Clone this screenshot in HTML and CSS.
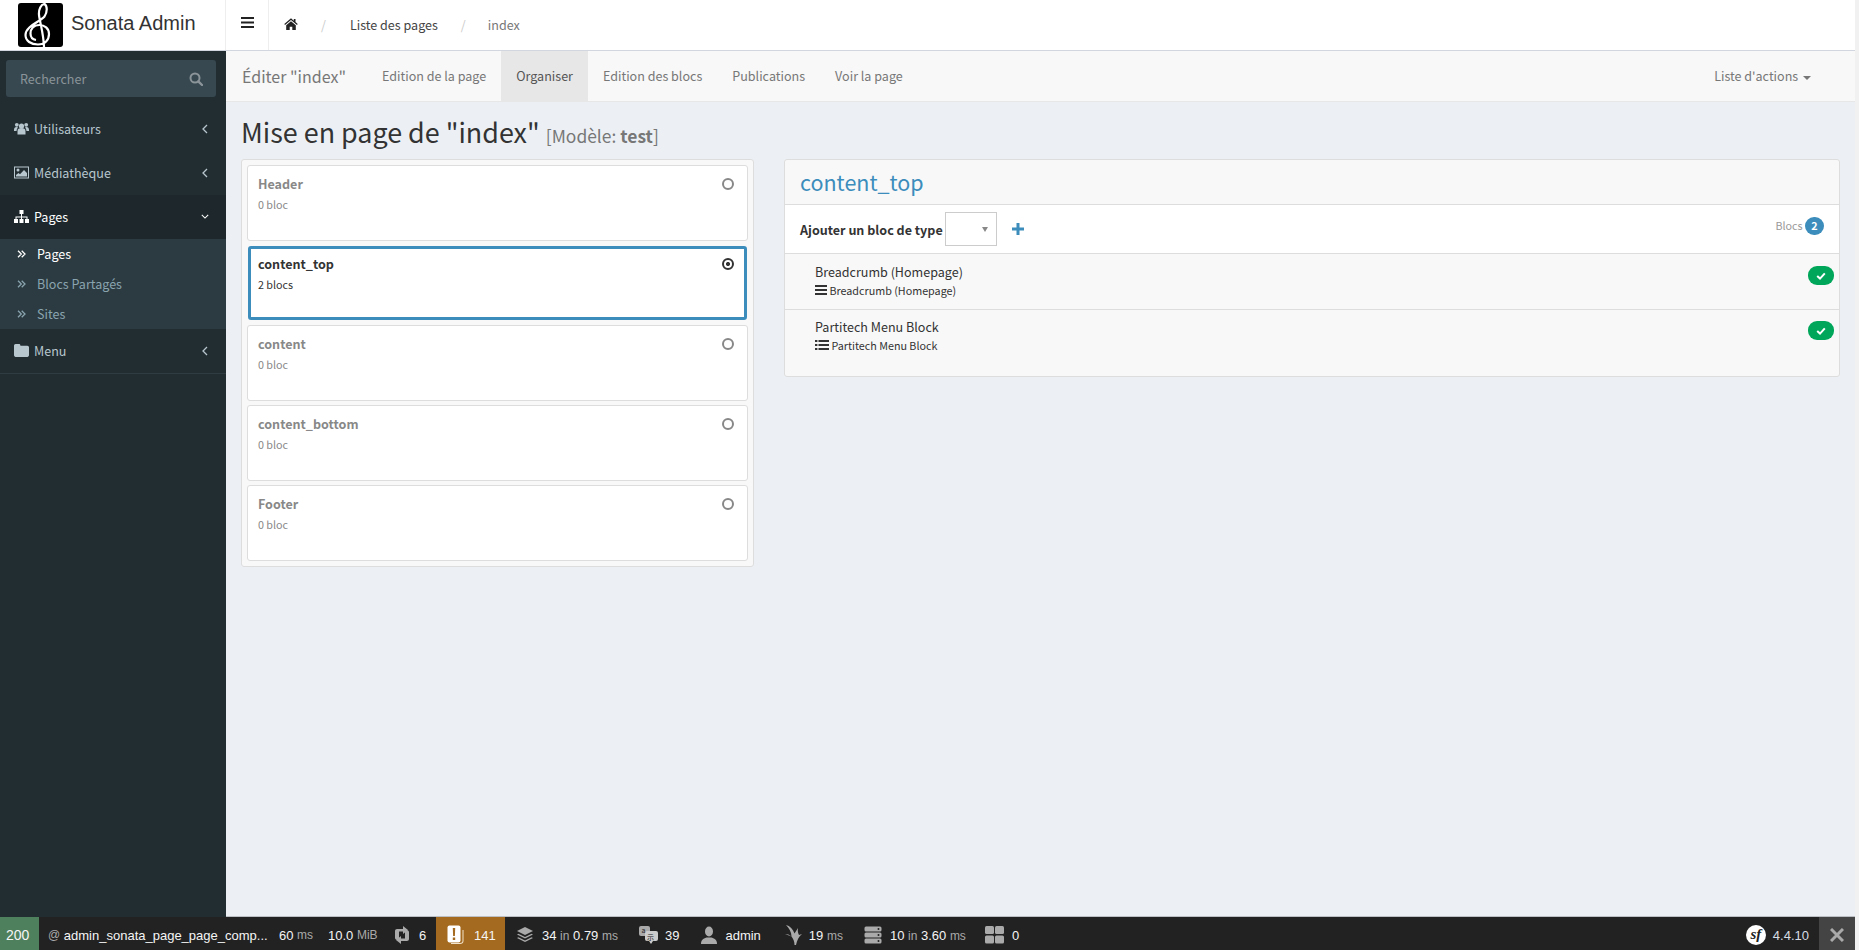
FILE: index.html
```html
<!DOCTYPE html>
<html lang="fr">
<head>
    <meta charset="UTF-8">
    <meta name="viewport" content="width=device-width, initial-scale=1.0">
    <title>Mise en page de "index"</title>
    <link rel="stylesheet" href="styles.css">
</head>
<body>
    <div class="app">
        <header class="topbar">
            <a class="logo">
                <svg class="logo-img" viewBox="0 0 45 44">
                    <rect width="45" height="44" rx="3" fill="#000"/>
                    <path d="M26 44C25.5 30 22 20 21 12 20.5 6 23 1.5 26.5 1 29.5 3 29.5 9 26.5 13.5 22.5 18.5 7.5 23 7.5 32 7.5 38 13 41.5 20 41.5 27 41.5 31 37 31 31 31 25.5 26.5 22 21.5 22 15.5 22 12.5 26 12.5 30.5 12.5 34.5 15 36.5 18 37" fill="none" stroke="#fff" stroke-width="2.2"/>
                </svg>
                <span>Sonata Admin</span>
            </a>
            <button class="toggle">
                <svg viewBox="0 0 13 11" width="13" height="11"><path d="M0 0h13v2H0zM0 4.5h13v2H0zM0 9h13v2H0z" fill="#222"/></svg>
            </button>
            <ol class="breadcrumb">
                <li>
                    <svg viewBox="0 0 14 12" width="14" height="12"><path d="M7 .3.3 6l.7.9L7 2l6 4.9.7-.9-2.2-1.900V1H9.8v1.800zM2.200 7.200V12h3.500V8.700h2.600V12h3.500V7.200L7 3.200z" fill="#222"/></svg>
                </li>
                <li class="sep">/</li>
                <li class="crumb">Liste des pages</li>
                <li class="sep sep-last">/</li>
                <li class="crumb-last">index</li>
            </ol>
        </header>

        <div class="middle">
            <aside class="sidebar">
                <div class="search">
                    <span>Rechercher</span>
                    <svg viewBox="0 0 14 14" width="14" height="14"><circle cx="6" cy="6" r="4.5" fill="none" stroke="currentColor" stroke-width="2"/><path d="M9.3 9.3 13 13" stroke="currentColor" stroke-width="2.4" stroke-linecap="round"/></svg>
                </div>
                <ul class="menu">
                    <li class="menu-item">
                        <svg class="menu-ico" viewBox="0 0 15 12"><circle cx="7.5" cy="3.5" r="2.6"/><circle cx="2.8" cy="2.3" r="1.9"/><circle cx="12.2" cy="2.3" r="1.9"/><path d="M3.5 12V8.500c0-2 1.500-2.900 4-2.900s4 .9 4 2.900V12zM0 7.500c0-2 .8-3 2.700-3 .6 0 1 .2 1.400.5-1 .8-1.500 2-1.500 3.600H0zM15 7.500c0-2-.8-3-2.700-3-.6 0-1 .2-1.400.5 1 .8 1.500 2 1.500 3.600H15z"/></svg>
                        <span>Utilisateurs</span>
                        <svg class="angle" viewBox="0 0 6 10"><path d="M5 1 1 5l4 4"/></svg>
                    </li>
                    <li class="menu-item">
                        <svg class="menu-ico" viewBox="0 0 15 12"><path fill-rule="evenodd" d="M0 0h15v12H0zM1 1v10h13V1z"/><circle cx="4" cy="3.5" r="1.5"/><path d="M2 10V8.500l2.500-2 1.500 1.200L10 3.500l3 3V10z"/></svg>
                        <span>Médiathèque</span>
                        <svg class="angle" viewBox="0 0 6 10"><path d="M5 1 1 5l4 4"/></svg>
                    </li>
                    <li class="menu-item open">
                        <svg class="menu-ico" viewBox="0 0 15 13"><path d="M5.500 0h4v4h-4zM0 9h4v4H0zM5.500 9h4v4h-4zM11 9h4v4h-4zM7 4h1v2.500h5.500V9h-1V7.500H8V9H7V7.500H2.500V9h-1V6.500H7z"/></svg>
                        <span>Pages</span>
                        <svg class="angle angle-down" viewBox="0 0 10 6"><path d="m1 1 4 4 4-4"/></svg>
                    </li>
                    <li>
                        <ul class="submenu">
                            <li class="sub-item active">
                                <svg class="dbl" viewBox="0 0 9 8"><path d="m1 .7 3.300 3.300L1 7.300M4.700.7 8 4 4.700 7.300"/></svg>
                                <span>Pages</span>
                            </li>
                            <li class="sub-item">
                                <svg class="dbl" viewBox="0 0 9 8"><path d="m1 .7 3.300 3.300L1 7.300M4.700.7 8 4 4.700 7.300"/></svg>
                                <span>Blocs Partagés</span>
                            </li>
                            <li class="sub-item">
                                <svg class="dbl" viewBox="0 0 9 8"><path d="m1 .7 3.300 3.300L1 7.300M4.700.7 8 4 4.700 7.300"/></svg>
                                <span>Sites</span>
                            </li>
                        </ul>
                    </li>
                    <li class="menu-item last">
                        <svg class="menu-ico" viewBox="0 0 14 12"><path d="M1.500 0h3.200c.8 0 1.300.6 1.300 1.500h6.500c.8 0 1.500.7 1.500 1.500v7.500c0 .8-.7 1.500-1.500 1.500h-11C.7 12 0 11.300 0 10.500v-9C0 .7.700 0 1.500 0z"/></svg>
                        <span>Menu</span>
                        <svg class="angle" viewBox="0 0 6 10"><path d="M5 1 1 5l4 4"/></svg>
                    </li>
                </ul>
            </aside>

            <main class="main">
                <nav class="navbar">
                    <span class="brand">Éditer "index"</span>
                    <a class="tab">Edition de la page</a>
                    <a class="tab active">Organiser</a>
                    <a class="tab">Edition des blocs</a>
                    <a class="tab">Publications</a>
                    <a class="tab">Voir la page</a>
                    <a class="tab actions">Liste d'actions <i class="caret"></i></a>
                </nav>

                <div class="content">
                    <h1>Mise en page de "index" <small>[Modèle: <b>test</b>]</small></h1>
                    <div class="composer">
                        <div class="panel containers">
                            <div class="card">
                                <div class="card-head"><b>Header</b><i class="radio"></i></div>
                                <div class="card-sub">0 bloc</div>
                            </div>
                            <div class="card selected">
                                <div class="card-head"><b>content_top</b><i class="radio on"></i></div>
                                <div class="card-sub">2 blocs</div>
                            </div>
                            <div class="card">
                                <div class="card-head"><b>content</b><i class="radio"></i></div>
                                <div class="card-sub">0 bloc</div>
                            </div>
                            <div class="card">
                                <div class="card-head"><b>content_bottom</b><i class="radio"></i></div>
                                <div class="card-sub">0 bloc</div>
                            </div>
                            <div class="card">
                                <div class="card-head"><b>Footer</b><i class="radio"></i></div>
                                <div class="card-sub">0 bloc</div>
                            </div>
                        </div>

                        <div class="panel blocks">
                            <h2 class="blocks-title">content_top</h2>
                            <div class="add-bar">
                                <b>Ajouter un bloc de type</b>
                                <span class="select"><i></i></span>
                                <svg class="plus" viewBox="0 0 12 12" width="12" height="12"><path d="M4.500 0h3v4.500H12v3H7.500V12h-3V7.500H0v-3h4.500z" fill="#3c8dbc"/></svg>
                                <span class="count">Blocs <em>2</em></span>
                            </div>
                            <div class="block-row">
                                <div class="block-info">
                                    <div class="block-name">Breadcrumb (Homepage)</div>
                                    <div class="block-type">
                                        <svg viewBox="0 0 12 10" width="12" height="10"><path d="M0 0h12v2H0zM0 4h12v2H0zM0 8h12v2H0z" fill="#333"/></svg>
                                        Breadcrumb (Homepage)
                                    </div>
                                </div>
                                <span class="status">
                                    <svg viewBox="0 0 10 8" width="10" height="8"><path d="M1.200 4 4 6.600 8.800 1.400" fill="none" stroke="#fff" stroke-width="2"/></svg>
                                </span>
                            </div>
                            <div class="block-row tall">
                                <div class="block-info">
                                    <div class="block-name">Partitech Menu Block</div>
                                    <div class="block-type">
                                        <svg viewBox="0 0 14 10" width="14" height="10"><path d="M0 0h2.400v2H0zM3.500 0H14v2H3.500zM0 4h2.400v2H0zM3.500 4H14v2H3.500zM0 8h2.400v2H0zM3.500 8H14v2H3.500z" fill="#333"/></svg>
                                        Partitech Menu Block
                                    </div>
                                </div>
                                <span class="status">
                                    <svg viewBox="0 0 10 8" width="10" height="8"><path d="M1.200 4 4 6.600 8.800 1.400" fill="none" stroke="#fff" stroke-width="2"/></svg>
                                </span>
                            </div>
                        </div>
                    </div>
                </div>
            </main>
        </div>

        <footer class="sfbar">
            <div class="sf-status">200</div>
            <div class="sf-block sf-route"><span class="lbl">@</span> admin_sonata_page_page_comp...</div>
            <div class="sf-block sf-time">60 <span class="lbl">ms</span></div>
            <div class="sf-block sf-mem">10.0 <span class="lbl">MiB</span></div>
            <div class="sf-block sf-git">
                <svg viewBox="0 0 18 20" width="18" height="20"><path d="M4 4h6V1l5 4-5 4V6.500H6v8H3.500c-.8 0-1.500-.7-1.500-1.500V6c0-1.100.9-2 2-2zM14 16H8v3l-5-4 5-4v2.500h4v-8h2.500c.8 0 1.500.7 1.500 1.500v7c0 1.100-.9 2-2 2z" fill="#aaa"/></svg>
                <span>6</span>
            </div>
            <div class="sf-block sf-warn">
                <svg viewBox="0 0 17 20" width="17" height="20"><path d="M4 19h9c2 0 3.500-1.200 3.500-3V5h-1v11c0 1.300-1 2-2.500 2H4z" fill="#f2e3cd"/><rect x="0.500" y="0.500" width="13" height="17" rx="2" fill="#fff"/><path d="M5.800 3h2.400l-.3 8H6.100zM5.800 12.500h2.400V15H5.800z" fill="#a46a1f"/></svg>
                <span>141</span>
            </div>
            <div class="sf-block sf-gap sf-twig">
                <svg viewBox="0 0 18 18" width="18" height="18"><path d="m9 1 8 4-8 4-8-4zM2.500 7.700 9 11l6.500-3.300L17 8.500l-8 4-8-4zM2.500 11.200 9 14.500l6.500-3.300L17 12l-8 4-8-4z" fill="#aaa"/></svg>
                <span>34 <span class="lbl">in</span> 0.79 <span class="lbl">ms</span></span>
            </div>
            <div class="sf-block sf-gap sf-trans">
                <svg viewBox="0 0 20 20" width="20" height="20"><rect x="0" y="1" width="11" height="10" rx="2" fill="#aaa"/><rect x="6" y="6" width="13" height="10" rx="2" fill="#ccc"/><path d="m10 16h4l-2 3z" fill="#ccc"/><text x="2.500" y="8" class="tr-a">a</text><text x="8" y="14.500" class="tr-b">示</text></svg>
                <span>39</span>
            </div>
            <div class="sf-block sf-gap sf-user">
                <svg viewBox="0 0 16 18" width="16" height="18"><ellipse cx="8" cy="5.500" rx="4" ry="5" fill="#aaa"/><path d="M0 18c0-4 2-5.500 5.500-6.500h5C14 12.500 16 14 16 18z" fill="#aaa"/></svg>
                <span>admin</span>
            </div>
            <div class="sf-block sf-gap sf-clock">
                <svg viewBox="0 0 18 20" width="18" height="20"><path d="M1 0c4 1 7 4 8.500 8.500L13 3c-.5 3 0 5 1 7l3-1c-3 2.500-5 6-6 11H9.500c0-3-1-6-3-8.500L0 9c2.500 0 4.500.8 6.500 2.500C6.500 7 4 3 1 0z" fill="#aaa"/></svg>
                <span>19 <span class="lbl">ms</span></span>
            </div>
            <div class="sf-block sf-gap sf-db">
                <svg viewBox="0 0 18 18" width="18" height="18"><rect x="0.500" y="0.500" width="17" height="5" rx="1.500" fill="#aaa"/><rect x="0.500" y="6.500" width="17" height="5" rx="1.500" fill="#aaa"/><rect x="0.500" y="12.500" width="17" height="5" rx="1.500" fill="#aaa"/><circle cx="14.500" cy="3" r="1" fill="#222"/><circle cx="14.500" cy="9" r="1" fill="#222"/><circle cx="14.500" cy="15" r="1" fill="#222"/></svg>
                <span>10 <span class="lbl">in</span> 3.60 <span class="lbl">ms</span></span>
            </div>
            <div class="sf-block sf-gap">
                <svg viewBox="0 0 19 18" width="19" height="18"><rect width="9" height="8" rx="1.500" fill="#aaa"/><rect x="10" width="9" height="8" rx="1.500" fill="#aaa"/><rect y="9.500" width="9" height="8" rx="1.500" fill="#aaa"/><rect x="10" y="9.500" width="9" height="8" rx="1.500" fill="#aaa"/></svg>
                <span>0</span>
            </div>
            <div class="sf-version">
                <span class="sf-logo">sf</span>
                <span>4.4.10</span>
            </div>
            <div class="sf-close">
                <svg viewBox="0 0 14 14" width="14" height="14"><path d="m1 1 12 12M13 1 1 13" stroke="#aaa" stroke-width="3"/></svg>
            </div>
        </footer>
    </div>
    <div class="scrollbar"></div>
</body>
</html>
```
FILE: styles.css
```css
* {
    box-sizing: border-box;
}
html, body {
    height: 950px;
    margin: 0;
    overflow: hidden;
}
body {
    display: flex;
    font-family: "Noto Sans CJK SC", "Open Sans", sans-serif;
    font-size: 12.55px;
    color: #333;
    background-color: #ecf0f5;
}
ul, ol {
    list-style: none;
    margin: 0;
    padding: 0;
}
.app {
    flex: 1;
    min-width: 0;
    height: 950px;
    overflow: hidden;
}
.scrollbar {
    width: 4px;
    background-color: #f1f1f1;
}

/* top bar */
.topbar {
    height: 51px;
    display: flex;
    background-color: #fff;
    border-bottom: 1px solid #d2d6de;
}
.logo {
    width: 226px;
    padding: 3px 0 0 18px;
    display: flex;
    border-right: 1px solid #eee;
}
.logo-img {
    width: 45px;
    height: 44px;
}
.logo span {
    margin: 6px 0 0 8px;
    font-family: "Liberation Sans", Arial, sans-serif;
    font-size: 20px;
    line-height: 28px;
    color: #333;
}
.toggle {
    width: 43px;
    padding: 0 0 3px;
    border: none;
    border-right: 1px solid #eee;
    background: none;
}
.breadcrumb {
    display: flex;
    align-items: center;
    padding: 0 0 2px 15px;
}
.breadcrumb svg {
    display: block;
}
.sep {
    margin: 0 24px 0 23px;
    color: #ccc;
}
.sep-last {
    margin: 0 22px 0 23px;
}
.crumb {
    color: #444;
}
.crumb-last {
    color: #777;
}

/* sidebar */
.middle {
    height: 866px;
    display: flex;
}
.sidebar {
    width: 226px;
    flex: none;
    background-color: #222d32;
    color: #b8c7ce;
}
.search {
    height: 37px;
    margin: 9px 10px 10px 6px;
    padding: 0 13px 0 14px;
    display: flex;
    align-items: center;
    justify-content: space-between;
    background-color: #374850;
    border-radius: 3px;
    color: #8a9499;
}
.menu-item {
    height: 44px;
    padding: 0 18px 1px 14px;
    display: flex;
    align-items: center;
}
.menu-item.open {
    background-color: #1e282c;
    color: #fff;
}
.menu-item.last {
    height: 45px;
    padding-bottom: 1px;
    border-bottom: 1px solid #2f3d43;
}
.menu-ico {
    width: 15px;
    height: 13px;
    margin-right: 5px;
    fill: currentColor;
}
.angle {
    width: 6px;
    height: 10px;
    margin-left: auto;
    fill: none;
    stroke: currentColor;
    stroke-width: 1.3;
}
.angle-down {
    width: 8px;
    height: 5px;
    margin-right: -1px;
}
.submenu {
    background-color: #2c3b41;
    color: #8aa4af;
}
.sub-item {
    height: 30px;
    padding: 0 0 1px 17px;
    display: flex;
    align-items: center;
}
.sub-item.active {
    color: #fff;
}
.dbl {
    width: 9px;
    height: 8px;
    margin-right: 11px;
    fill: none;
    stroke: currentColor;
    stroke-width: 1.3;
}

/* navbar */
.main {
    flex: 1;
    min-width: 0;
}
.navbar {
    height: 51px;
    padding-left: 16px;
    display: flex;
    align-items: stretch;
    line-height: 50px;
    background-color: #f8f8f8;
    border-bottom: 1px solid #e7e7e7;
    color: #777;
}
.brand {
    width: 125px;
    font-size: 16px;
}
.tab {
    padding: 0 15px;
}
.tab.active {
    background-color: #e7e7e7;
    color: #555;
}
.actions {
    margin-left: auto;
    padding-right: 44px;
}
.caret {
    display: inline-block;
    margin-left: 2px;
    vertical-align: middle;
    border-top: 4px solid #777;
    border-left: 4px solid transparent;
    border-right: 4px solid transparent;
}

/* content */
.content {
    padding: 0 15px;
}
h1 {
    height: 33px;
    margin: 13px 0 11px;
    font-size: 26.9px;
    font-weight: 400;
    line-height: 33px;
    color: #333;
}
h1 small {
    font-size: 17.45px;
    line-height: 1;
    color: #777;
}
.composer {
    display: grid;
    grid-template-columns: 513px 1fr;
    gap: 30px;
    align-items: start;
}
.panel {
    background-color: #f8f8f8;
    border: 1px solid #ddd;
    border-radius: 3px;
}
.containers {
    padding: 5px;
    display: flex;
    flex-direction: column;
    gap: 4px;
}
.card {
    height: 76px;
    padding: 8px 13px 0 10px;
    background-color: #fff;
    border: 1px solid #ddd;
    border-radius: 3px;
    color: #888;
}
.card.selected {
    margin: 1px;
    height: 74px;
    padding: 5px 10px 0 7px;
    border: 3px solid #3c8dbc;
    color: #333;
}
.card-head {
    display: flex;
    justify-content: space-between;
    align-items: center;
    line-height: 20px;
}
.card-sub {
    margin-top: 2px;
    font-size: 10.75px;
    line-height: 18px;
}
.radio {
    width: 12px;
    height: 12px;
    border: 2px solid #888;
    border-radius: 50%;
}
.radio.on {
    border-color: #333;
    background: radial-gradient(circle, #333 0 1.8px, #fff 2.3px);
}
.blocks {
    height: 218px;
}
.blocks-title {
    height: 45px;
    margin: 0;
    padding: 0 15px;
    font-size: 21.5px;
    font-weight: 400;
    line-height: 44px;
    color: #3c8dbc;
    border-bottom: 1px solid #ddd;
}
.add-bar {
    height: 49px;
    padding: 0 15px;
    display: flex;
    align-items: center;
    background-color: #fff;
    border-bottom: 1px solid #ddd;
}
.select {
    position: relative;
    width: 52px;
    height: 34px;
    margin-left: 2px;
    background-color: #fff;
    border: 1px solid #ccc;
}
.select i {
    position: absolute;
    top: 14px;
    right: 8px;
    border-top: 5px solid #888;
    border-left: 3px solid transparent;
    border-right: 3px solid transparent;
}
.plus {
    margin-left: 15px;
}
.count {
    margin: -6px 0 0 auto;
    font-size: 10.75px;
    color: #999;
}
.count em {
    display: inline-block;
    min-width: 19px;
    padding: 0 5px;
    font-style: normal;
    font-weight: 700;
    line-height: 18px;
    text-align: center;
    color: #fff;
    background-color: #3c8dbc;
    border-radius: 10px;
}
.block-row {
    height: 56px;
    padding: 7px 5px 0 16px;
    display: flex;
    justify-content: space-between;
    align-items: flex-start;
    border-bottom: 1px solid #ddd;
}
.block-row.tall {
    height: 66px;
    padding-top: 6px;
    border-bottom: none;
}
.block-info {
    padding-left: 14px;
}
.block-name {
    line-height: 22px;
}
.block-type {
    font-size: 10.75px;
    line-height: 15px;
}
.status {
    width: 26px;
    height: 19px;
    margin-top: 5px;
    display: flex;
    align-items: center;
    justify-content: center;
    background-color: #00a65a;
    border-radius: 9px;
}

/* symfony toolbar */
.sfbar {
    height: 36px;
    display: flex;
    align-items: center;
    font-family: "Liberation Sans", Arial, sans-serif;
    font-size: 13px;
    color: #f5f5f5;
    background-color: #222;
    box-shadow: 0 -1px 0 rgba(0, 0, 0, .2);
}
.lbl {
    font-size: 12px;
    color: #aaa;
}
.sf-status {
    width: 39px;
    height: 36px;
    padding-left: 6px;
    line-height: 36px;
    font-size: 14px;
    background-color: #4f805d;
}
.sf-block {
    height: 36px;
    display: flex;
    align-items: center;
    gap: 8px;
    white-space: pre;
}
.sf-route {
    width: 233px;
    padding-left: 9px;
    gap: 0;
}
.sf-time {
    width: 56px;
    padding-left: 7px;
    gap: 0;
}
.sf-mem {
    width: 55px;
    gap: 0;
}
.sf-git {
    width: 53px;
    padding-left: 10px;
}
.sf-warn {
    width: 69px;
    padding-left: 11px;
    gap: 10px;
    background-color: #a46a1f;
}
.sf-gap {
    padding: 0 11px;
}
.sf-twig {
    padding-right: 10px;
}
.sf-trans {
    gap: 6px;
}
.sf-user {
    padding-right: 13px;
    gap: 8px;
}
.sf-clock {
    padding-right: 10px;
    gap: 6px;
}
.sf-db {
    padding-right: 8px;
}
.tr-a, .tr-b {
    font-family: "Noto Sans CJK SC", sans-serif;
    font-size: 7px;
    fill: #222;
}
.sf-version {
    height: 36px;
    margin-left: auto;
    padding-right: 10px;
    display: flex;
    align-items: center;
    gap: 7px;
    color: #d8dde5;
}
.sf-logo {
    width: 20px;
    height: 20px;
    font-family: "Liberation Serif", serif;
    font-size: 15px;
    font-style: italic;
    font-weight: 700;
    line-height: 19px;
    text-align: center;
    color: #222;
    background-color: #fff;
    border-radius: 50%;
}
.sf-close {
    width: 36px;
    height: 36px;
    display: flex;
    align-items: center;
    justify-content: center;
    background-color: #444;
}
```
